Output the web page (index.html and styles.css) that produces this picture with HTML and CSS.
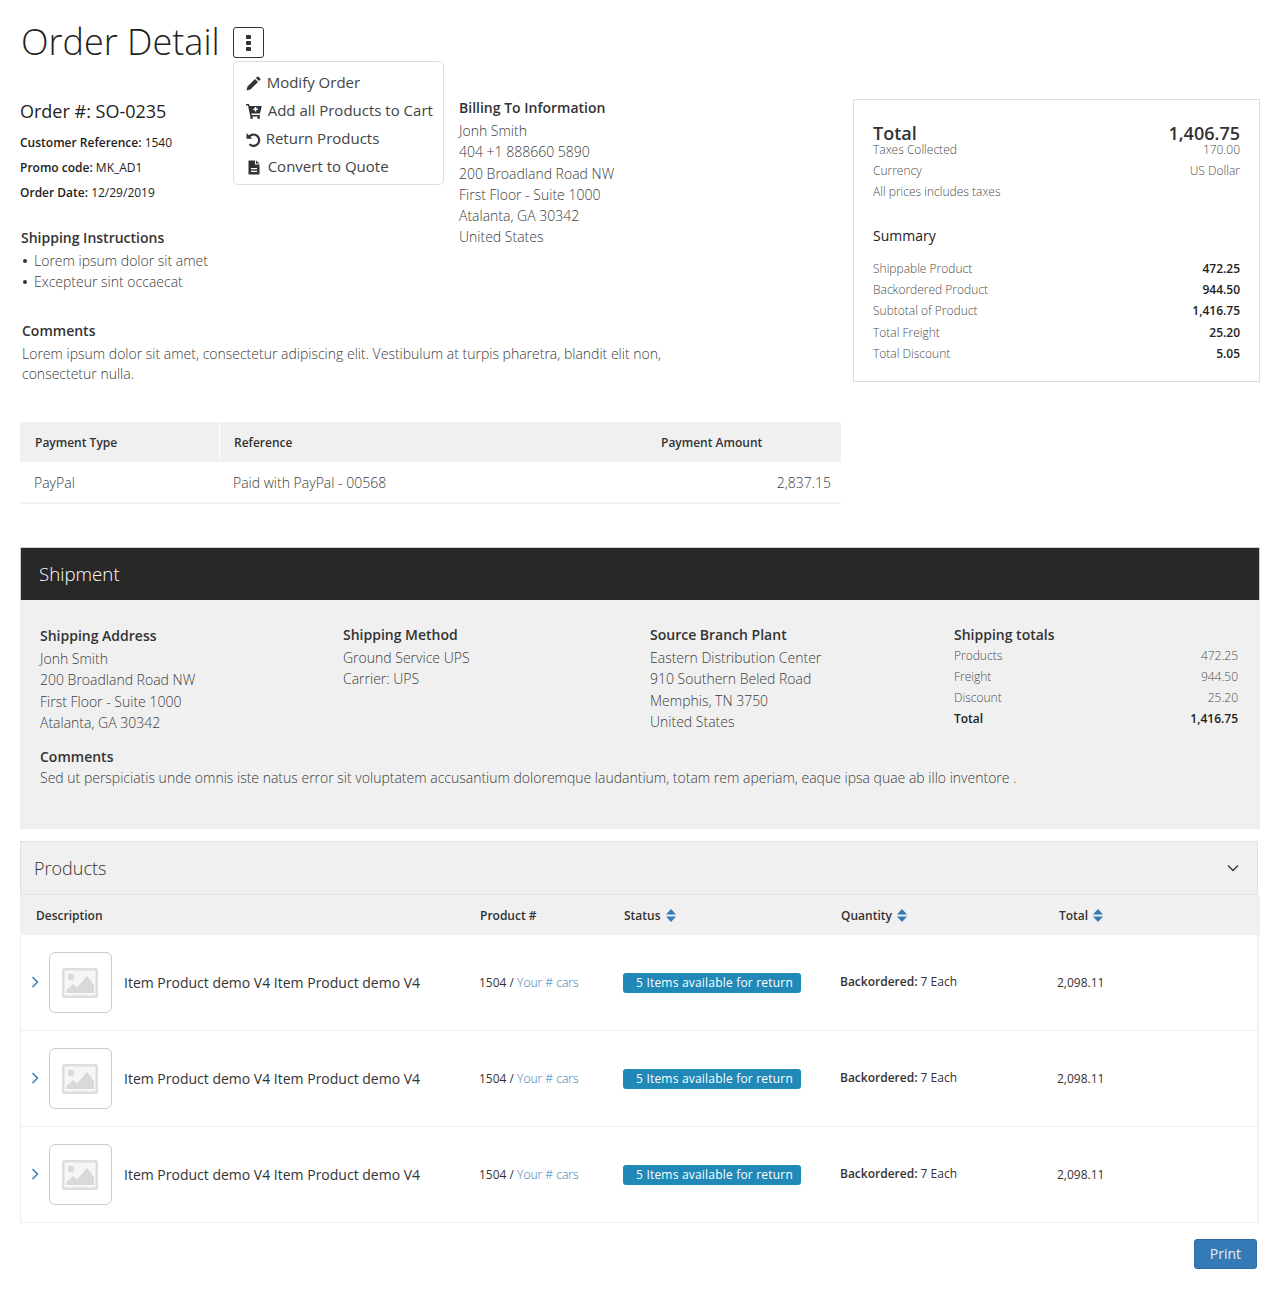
FILE: index.html
```html
<!DOCTYPE html>
<html lang="en">
<head>
<meta charset="utf-8">
<title>Order Detail</title>
<link rel="stylesheet" href="styles.css">
</head>
<body>
<div class="page">
  <header class="title-row">
    <h1>Order Detail</h1>
    <div class="menu-wrap">
      <button class="kebab" aria-label="Actions"><svg width="5" height="16" viewBox="0 0 5 16"><rect x="0" y="0" width="5" height="4" rx=".9"/><rect x="0" y="6" width="5" height="4" rx=".9"/><rect x="0" y="12" width="5" height="4" rx=".9"/></svg></button>
      <ul class="menu">
        <li><svg class="mi" width="15" height="15" viewBox="0 0 15 15"><path d="M11.200.8a1 1 0 0 1 1.400 0l1.600 1.600a1 1 0 0 1 0 1.400l-1.300 1.300-3-3z"/><path d="M9 2.900l3 3-7.600 7.600L.5 14.500l1-3.900z"/></svg><span class="mt1">Modify Order</span></li>
        <li><svg class="mi" width="16" height="15" viewBox="0 0 16 15"><path d="M0 0h3l.6 2H15.800l-1.800 7.500H5.400l.3 1.500H14v1.500H4.300L2 1.500H0z"/><circle cx="5.600" cy="13.600" r="1.400"/><circle cx="12.600" cy="13.600" r="1.400"/><path fill="#fff" d="M8.800 3h1.500v1.500h1.500V6h-1.500v1.500H8.800V6H7.300V4.500h1.500z"/></svg><span class="mt4">Add all Products to Cart</span></li>
        <li><svg class="mi" width="15" height="15" viewBox="0 0 15 15"><path d="M.5 1v5.700h5.700z"/><path d="M3 4.700A5.700 5.700 0 1 1 3.500 12.300" fill="none" stroke="#333" stroke-width="2.200"/></svg><span class="mt3">Return Products</span></li>
        <li><svg class="mi doc" width="12" height="15" viewBox="0 0 12 15"><path d="M1 .5h6v4h4.500v9.500a.5.5 0 0 1-.5.5H1a.5.5 0 0 1-.5-.5V1a.5.5 0 0 1 .5-.5z"/><path d="M8 .5 11.500 3.500H8z"/><path fill="#fff" d="M3 8h6v1.200H3zM3 10.700h6v1.200H3z"/></svg><span class="mt2">Convert to Quote</span></li>
      </ul>
    </div>
  </header>

  <div class="top">
    <div class="top-main">
      <div class="info-row">
        <div class="order-info">
          <h2>Order #: SO-0235</h2>
          <p><b>Customer Reference:</b> 1540</p>
          <p><b>Promo code:</b> MK_AD1</p>
          <p><b>Order Date:</b> 12/29/2019</p>
          <div class="instructions">
            <h3>Shipping Instructions</h3>
            <ul class="bullets">
              <li>Lorem ipsum dolor sit amet</li>
              <li>Excepteur sint occaecat</li>
            </ul>
          </div>
        </div>
        <div class="billing">
          <h3>Billing To Information</h3>
          <div class="lines">Jonh Smith<br>404 +1 888660 5890<br>200 Broadland Road NW<br>First Floor - Suite 1000<br>Atalanta, GA 30342<br>United States</div>
        </div>
      </div>
      <div class="comments">
        <h3>Comments</h3>
        <div class="lines">Lorem ipsum dolor sit amet, consectetur adipiscing elit. Vestibulum at turpis pharetra, blandit elit non, consectetur nulla.</div>
      </div>
      <div class="payment">
        <div class="pay-row pay-head"><span class="c1">Payment Type</span><span class="c2">Reference</span><span class="c3">Payment Amount</span></div>
        <div class="pay-row pay-body"><span class="c1">PayPal</span><span class="c2">Paid with PayPal - 00568</span><span class="c3 amount">2,837.15</span></div>
      </div>
    </div>
    <aside class="total-card">
      <div class="kv big"><span>Total</span><span>1,406.75</span></div>
      <div class="kv"><span>Taxes Collected</span><span>170.00</span></div>
      <div class="kv"><span>Currency</span><span>US Dollar</span></div>
      <div class="kv"><span>All prices includes taxes</span></div>
      <h4>Summary</h4>
      <div class="kv strong"><span>Shippable Product</span><b>472.25</b></div>
      <div class="kv strong"><span>Backordered Product</span><b>944.50</b></div>
      <div class="kv strong"><span>Subtotal of Product</span><b>1,416.75</b></div>
      <div class="kv strong"><span>Total Freight</span><b>25.20</b></div>
      <div class="kv strong"><span>Total Discount</span><b>5.05</b></div>
    </aside>
  </div>

  <section class="shipment">
    <div class="ship-head">Shipment</div>
    <div class="ship-body">
      <div class="ship-cols">
        <div class="sc sc1"><h3>Shipping Address</h3><div class="lines">Jonh Smith<br>200 Broadland Road NW<br>First Floor - Suite 1000<br>Atalanta, GA 30342</div></div>
        <div class="sc sc2"><h3>Shipping Method</h3><div class="lines">Ground Service UPS<br>Carrier: UPS</div></div>
        <div class="sc sc3"><h3>Source Branch Plant</h3><div class="lines">Eastern Distribution Center<br>910 Southern Beled Road<br>Memphis, TN 3750<br>United States</div></div>
        <div class="sc sc4"><h3>Shipping totals</h3>
          <div class="kv"><span>Products</span><span>472.25</span></div>
          <div class="kv"><span>Freight</span><span>944.50</span></div>
          <div class="kv"><span>Discount</span><span>25.20</span></div>
          <div class="kv tot"><b>Total</b><b>1,416.75</b></div>
        </div>
      </div>
      <div class="ship-comments"><h3>Comments</h3><div class="lines">Sed ut perspiciatis unde omnis iste natus error sit voluptatem accusantium doloremque laudantium, totam rem aperiam, eaque ipsa quae ab illo inventore .</div></div>
    </div>
  </section>

  <section class="products">
    <div class="prod-head"><span>Products</span><svg width="12" height="8" viewBox="0 0 12 8"><path d="M1 1.500 6 6.500l5-5" fill="none" stroke="#333" stroke-width="1.300"/></svg></div>
    <div class="grid-row grid-head">
      <span class="g-desc head-desc">Description</span>
      <span class="g-prod">Product #</span>
      <span class="g-status">Status<svg class="sort" width="10" height="13" viewBox="0 0 10 13"><path d="M5 0 10 5.500H0zM5 13 0 7.500h10z"/></svg></span>
      <span class="g-qty">Quantity<svg class="sort" width="10" height="13" viewBox="0 0 10 13"><path d="M5 0 10 5.500H0zM5 13 0 7.500h10z"/></svg></span>
      <span class="g-total">Total<svg class="sort" width="10" height="13" viewBox="0 0 10 13"><path d="M5 0 10 5.500H0zM5 13 0 7.500h10z"/></svg></span>
    </div>
    <div class="grid-row item">
      <div class="g-desc"><svg class="chev" width="8" height="12" viewBox="0 0 8 12"><path d="M1.500 1 6.500 6l-5 5" fill="none" stroke="#337ab7" stroke-width="1.500"/></svg><span class="thumb"><svg width="36" height="30" viewBox="0 0 36 30"><rect x="1.250" y="1.250" width="33.500" height="27.500" rx="1.500" fill="#f6f6f6" stroke="#ddd" stroke-width="2.500"/><circle cx="9" cy="9" r="3.300" fill="#d9d9d9"/><path d="M4.500 25v-3l6.500-6 4 3.500L25 8l7 9v8z" fill="#d9d9d9"/></svg></span><span class="name">Item Product demo V4 Item Product demo V4</span></div>
      <div class="g-prod">1504 / <a>Your # cars</a></div>
      <div class="g-status"><span class="badge">5 Items available for return</span></div>
      <div class="g-qty up"><b>Backordered:</b> 7 Each</div>
      <div class="g-total">2,098.11</div>
    </div>
    <div class="grid-row item">
      <div class="g-desc"><svg class="chev" width="8" height="12" viewBox="0 0 8 12"><path d="M1.500 1 6.500 6l-5 5" fill="none" stroke="#337ab7" stroke-width="1.500"/></svg><span class="thumb"><svg width="36" height="30" viewBox="0 0 36 30"><rect x="1.250" y="1.250" width="33.500" height="27.500" rx="1.500" fill="#f6f6f6" stroke="#ddd" stroke-width="2.500"/><circle cx="9" cy="9" r="3.300" fill="#d9d9d9"/><path d="M4.500 25v-3l6.500-6 4 3.500L25 8l7 9v8z" fill="#d9d9d9"/></svg></span><span class="name">Item Product demo V4 Item Product demo V4</span></div>
      <div class="g-prod">1504 / <a>Your # cars</a></div>
      <div class="g-status"><span class="badge">5 Items available for return</span></div>
      <div class="g-qty up"><b>Backordered:</b> 7 Each</div>
      <div class="g-total">2,098.11</div>
    </div>
    <div class="grid-row item">
      <div class="g-desc"><svg class="chev" width="8" height="12" viewBox="0 0 8 12"><path d="M1.500 1 6.500 6l-5 5" fill="none" stroke="#337ab7" stroke-width="1.500"/></svg><span class="thumb"><svg width="36" height="30" viewBox="0 0 36 30"><rect x="1.250" y="1.250" width="33.500" height="27.500" rx="1.500" fill="#f6f6f6" stroke="#ddd" stroke-width="2.500"/><circle cx="9" cy="9" r="3.300" fill="#d9d9d9"/><path d="M4.500 25v-3l6.500-6 4 3.500L25 8l7 9v8z" fill="#d9d9d9"/></svg></span><span class="name">Item Product demo V4 Item Product demo V4</span></div>
      <div class="g-prod">1504 / <a>Your # cars</a></div>
      <div class="g-status"><span class="badge">5 Items available for return</span></div>
      <div class="g-qty up"><b>Backordered:</b> 7 Each</div>
      <div class="g-total">2,098.11</div>
    </div>
  </section>
  <div class="actions"><button class="print">Print</button></div>
</div>
</body>
</html>
```
FILE: styles.css
```css
* { box-sizing: border-box; }
html, body { margin: 0; padding: 0; background: #fff; }
body { font-family: "Open Sans", "Liberation Sans", sans-serif; font-size: 14px; line-height: 21px; color: #333; font-weight: 300; }
b { font-weight: 600; }
h1, h2, h3, h4, p, ul { margin: 0; padding: 0; }
ul { list-style: none; }
.page { padding: 0 20px; height: 1296px; overflow: hidden; }

.title-row { display: flex; align-items: center; height: 84px; padding-left: 1px; }
h1 { font-size: 36px; font-weight: 300; line-height: 44px; color: #222; }
.menu-wrap { position: relative; margin-left: 13px; margin-top: 1px; height: 31px; }
.kebab { width: 31px; height: 31px; padding: 0; background: #fff; border: 1px solid #333; border-radius: 3px; display: flex; align-items: center; justify-content: center; }
.kebab svg { fill: #333; }
.menu { position: absolute; left: 0; top: 34px; width: 211px; height: 124px; background: #fff; border: 1px solid #ddd; border-radius: 5px; padding: 6px 0 0 12px; font-size: 15px; font-weight: 400; color: #444; }
.menu li { height: 28px; display: flex; align-items: center; }
.mi { fill: #333; flex: none; margin-top: 2px; }
.mt1 { margin-left: 6px; }
.mt2 { margin-left: 5px; }
.mt3 { margin-left: 5px; }
.mt4 { margin-left: 6px; }
.doc { margin-left: 2px; margin-right: 3px; }

.top { display: flex; align-items: flex-start; }
.top-main { width: 821px; flex: none; }
.info-row { display: flex; }
.order-info { width: 439px; }
h2 { font-size: 18px; font-weight: 400; line-height: 24px; color: #222; margin-top: 15px; margin-bottom: 11px; }
.order-info p { font-size: 12px; line-height: 18px; margin-bottom: 7px; font-weight: 400; color: #222; }
h3 { font-size: 14px; font-weight: 600; line-height: 21px; color: #333; margin-bottom: 2px; }
.lines { color: #3c3c3c; line-height: 21.25px; }
.instructions { margin-top: 25px; padding-left: 1px; }
.bullets li { padding-left: 13px; position: relative; color: #3c3c3c; }
.bullets li::before { content: ""; position: absolute; left: 2px; top: 9px; width: 4px; height: 4px; border-radius: 50%; background: #333; }
.billing { padding-top: 13px; }
.comments { margin-top: 28px; padding-left: 2px; width: 680px; }
.comments h3 { margin-bottom: 3px; }
.comments .lines { line-height: 20px; }
.payment { margin-top: 38px; }
.pay-row { display: flex; }
.pay-head { height: 40px; background: #f0f0f0; align-items: center; font-size: 12px; font-weight: 600; color: #333; }
.pay-body { height: 42px; align-items: center; border-bottom: 2px solid #f2f2f2; color: #3c3c3c; padding-top: 1px; }
.c1 { width: 200px; padding-left: 15px; }
.pay-head .c1 { border-right: 1px solid #fff; height: 100%; display: flex; align-items: center; }
.c2 { width: 427px; padding-left: 14px; }
.pay-body .c1 { padding-left: 14px; }
.pay-body .c2 { padding-left: 13px; }
.c3 { flex: 1; padding-left: 14px; }
.amount { text-align: right; padding-right: 10px; }

.total-card { width: 407px; height: 283px; margin-left: 12px; margin-top: 15px; border: 1px solid #ddd; padding: 27px 19px 0 19px; }
.kv { display: flex; justify-content: space-between; font-size: 12px; line-height: 21px; color: #4c4c4c; }
.big { font-size: 18px; font-weight: 600; line-height: 12px; color: #333; }
.total-card h4 { font-size: 14px; font-weight: 400; line-height: 21px; color: #222; margin-top: 23px; margin-bottom: 12px; }
.strong { line-height: 21.2px; }
.kv b { color: #222; }

.shipment { margin-top: 43px; }
.ship-head { height: 53px; background: #282828; color: #fff; font-size: 18.7px; line-height: 52px; padding-left: 18px; font-weight: 300; border-top: 1px solid #ccc; border-left: 1px solid #ccc; border-right: 1px solid #ccc; }
.ship-body { height: 229px; background: #f0f0f0; padding: 25px 22px 0 20px; }
.ship-cols { display: flex; }
.sc1 { width: 303px; }
.sc2 { width: 307px; margin-top: -1px; }
.sc3 { width: 304px; margin-top: -1px; }
.sc4 { flex: 1; margin-top: -1px; }
.sc4 h3 { margin-bottom: 0; }
.ship-comments { margin-top: 13px; }
.ship-comments h3 { margin-bottom: 0; }
.kv.tot { color: #222; }

.products { width: 1238px; }
.shipment + .products { margin-top: 12px; }
.prod-head { height: 54px; background: #f0f0f0; border: 1px solid #e2e2e2; display: flex; justify-content: space-between; align-items: center; padding: 0 18px 0 13px; font-size: 18px; color: #333; }
.grid-row { display: grid; grid-template-columns: 458px 144px 217px 218px 1fr; }
.grid-head { height: 40px; width: 1240px; background: #f0f0f0; align-items: center; font-size: 12px; font-weight: 600; color: #333; }
.grid-head > span { padding-left: 2px; }
.grid-head > .head-desc { padding-left: 16px; }
.sort { fill: #337ab7; margin-left: 5px; vertical-align: -2px; }
.item { height: 96px; width: 1239px; align-items: center; font-size: 12px; border-left: 1px solid #eee; border-right: 2px solid #f0f0f0; border-bottom: 1px solid #eee; font-weight: 400; color: #333; }
.item .g-desc { display: flex; align-items: center; padding-left: 10px; }
.item .g-total { margin-left: -1px; }
.item .g-status { display: flex; margin-top: 1px; }
.chev { margin-right: 10px; margin-bottom: 2px; }
.thumb { width: 63px; height: 61px; border: 1px solid #ccc; border-radius: 6px; display: flex; align-items: center; justify-content: center; margin-right: 12px; padding-right: 1px; }
.name { font-size: 14px; }
.g-prod a { color: #337ab7; font-weight: 300; }
.badge { width: 178px; height: 20px; line-height: 20px; background: #2089b8; color: #fff; border-radius: 3px; text-align: center; padding-left: 5px; letter-spacing: .2px; }
.up { position: relative; top: -1px; }
.actions { display: flex; justify-content: flex-end; padding: 16px 3px 0 0; }
.print { width: 63px; height: 30px; background: #337ab7; color: #e8eff6; border: 1px solid #2e6da4; border-radius: 3px; font: 400 14px "Open Sans", sans-serif; padding: 0 0 2px; }
```
